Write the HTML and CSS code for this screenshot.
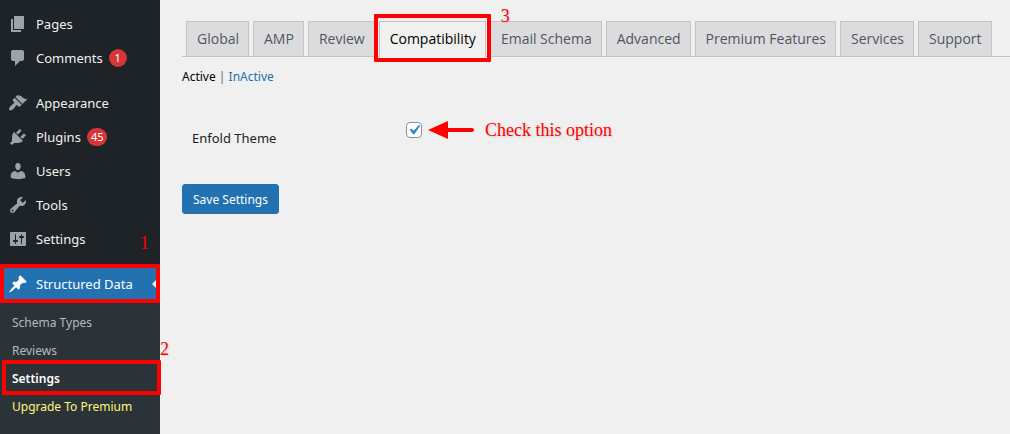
FILE: index.html
```html
<!DOCTYPE html>
<html lang="en">
<head>
<meta charset="utf-8">
<title>Structured Data Settings</title>
<link rel="stylesheet" href="styles.css">
</head>
<body>
<div class="layout">
  <nav class="sidebar" aria-label="Main menu">
    <ul class="menu">
      <li><a class="menu-link" href="#"><svg class="icon" viewBox="0 0 20 20"><path d="M6 15V2h10v13H6zm-1 1h8v2H3V5h2v11z"/></svg>Pages</a></li>
      <li><a class="menu-link" href="#"><svg class="icon" viewBox="0 0 20 20"><path d="M5 2h9c1.1 0 2 .9 2 2v7c0 1.1-.9 2-2 2h-2l-5 5v-5H5c-1.1 0-2-.9-2-2V4c0-1.1.9-2 2-2z"/></svg>Comments<span class="count">1</span></a></li>
      <li class="group"><a class="menu-link" href="#"><svg class="icon" viewBox="0 0 20 20"><path d="M14.48 11.06L7.41 3.99l1.5-1.5c.5-.56 2.3-.47 3.51.32 1.21.8 1.43 1.28 2.91 2.1 1.18.64 2.45 1.26 4.45.85zm-.71.71L6.7 4.7 4.93 6.47c-.39.39-.39 1.02 0 1.41l1.06 1.06c.39.39.39 1.03 0 1.42-.6.6-1.43 1.11-2.21 1.69-.35.26-.7.53-1.01.84C1.43 14.23.4 16.08 1.4 17.07c.99 1 2.84-.03 4.18-1.36.31-.31.58-.66.85-1.02.57-.78 1.08-1.61 1.69-2.21.39-.39 1.02-.39 1.41 0l1.06 1.06c.39.39 1.02.39 1.41 0z"/></svg>Appearance</a></li>
      <li><a class="menu-link" href="#"><svg class="icon" viewBox="0 0 20 20"><path d="M13.11 4.36L9.87 7.6 8 5.73l3.24-3.24c.35-.34 1.05-.2 1.56.32.52.51.66 1.21.31 1.55zm-8 1.77l.91-1.12 9.01 9.01-1.19.84c-.71.71-2.63 1.16-3.82 1.16H6.14L4.9 17.26c-.59.59-1.54.59-2.12 0-.59-.58-.59-1.53 0-2.12l1.24-1.24v-3.88c0-1.13.4-3.19 1.09-3.89zm7.26 3.97l3.24-3.24c.34-.35 1.04-.21 1.55.31.52.51.66 1.21.31 1.55l-3.24 3.25z"/></svg>Plugins<span class="count">45</span></a></li>
      <li><a class="menu-link" href="#"><svg class="icon" viewBox="0 0 20 20"><path d="M10 9.25c-2.27 0-2.73-3.44-2.73-3.44C7 4.02 7.82 2 9.97 2c2.16 0 2.98 2.02 2.71 3.81 0 0-.41 3.44-2.68 3.44zm0 2.57L12.72 10c2.39 0 4.52 2.33 4.52 4.53v2.49s-3.65 1.13-7.24 1.13c-3.65 0-7.24-1.13-7.24-1.13v-2.49c0-2.25 1.94-4.48 4.47-4.48z"/></svg>Users</a></li>
      <li><a class="menu-link" href="#"><svg class="icon" viewBox="0 0 20 20"><path d="M16.68 9.77c-1.34 1.34-3.3 1.67-4.95.99l-5.41 6.52c-.99.99-2.59.99-3.58 0s-.99-2.59 0-3.57l6.52-5.42c-.68-1.65-.35-3.61.99-4.95 1.28-1.28 3.12-1.62 4.72-1.06l-2.89 2.89 2.82 2.82 2.86-2.87c.53 1.58.18 3.39-1.08 4.65zM3.81 16.21c.4.39 1.04.39 1.43 0 .4-.4.4-1.04 0-1.43-.39-.4-1.03-.4-1.43 0-.39.39-.39 1.03 0 1.43z"/></svg>Tools</a></li>
      <li><a class="menu-link" href="#"><svg class="icon" viewBox="0 0 20 20"><path d="M18 16V4c0-.55-.45-1-1-1H3c-.55 0-1 .45-1 1v12c0 .55.45 1 1 1h14c.55 0 1-.45 1-1zM8 11h1c.55 0 1 .45 1 1s-.45 1-1 1H8v1.5c0 .28-.22.5-.5.5s-.5-.22-.5-.5V13H6c-.55 0-1-.45-1-1s.45-1 1-1h1V5.5c0-.28.22-.5.5-.5s.5.22.5.5V11zm5-2h-1c-.55 0-1-.45-1-1s.45-1 1-1h1V5.5c0-.28.22-.5.5-.5s.5.22.5.5V7h1c.55 0 1 .45 1 1s-.45 1-1 1h-1v5.5c0 .28-.22.5-.5.5s-.5-.22-.5-.5V9z"/></svg>Settings</a></li>
      <li class="group"><a class="menu-link current" href="#"><svg class="icon" viewBox="0 0 20 20"><path d="M10.44 3.02l1.82-1.82 6.36 6.35-1.83 1.82c-1.05-.68-2.48-.57-3.41.36l-.75.75c-.92.93-1.04 2.35-.35 3.41l-1.83 1.82-2.41-2.41-2.8 2.79c-.42.42-3.38 2.71-3.8 2.29s1.86-3.39 2.28-3.81l2.79-2.79L4.1 9.36l1.83-1.82c1.05.69 2.48.57 3.4-.36l.75-.75c.93-.92 1.05-2.35.36-3.41z"/></svg>Structured Data<span class="note step-one">1</span></a></li>
    </ul>
    <ul class="submenu">
      <li><a class="submenu-link" href="#">Schema Types</a></li>
      <li><a class="submenu-link" href="#">Reviews</a></li>
      <li><a class="submenu-link selected" href="#">Settings<span class="note step-two">2</span></a></li>
      <li><a class="submenu-link upgrade" href="#">Upgrade To Premium</a></li>
    </ul>
  </nav>

  <main class="content">
    <nav class="tabs" aria-label="Settings sections">
      <a class="tab" href="#">Global</a>
      <a class="tab" href="#">AMP</a>
      <a class="tab" href="#">Review</a>
      <a class="tab active" href="#" aria-current="page">Compatibility<span class="note step-three">3</span></a>
      <a class="tab" href="#">Email Schema</a>
      <a class="tab" href="#">Advanced</a>
      <a class="tab" href="#">Premium Features</a>
      <a class="tab" href="#">Services</a>
      <a class="tab" href="#">Support</a>
    </nav>
    <p class="filters"><a class="filter-current" href="#">Active</a> | <a class="filter" href="#">InActive</a></p>
    <form class="form">
      <div class="field">
        <label class="label" for="enfold">Enfold Theme</label>
        <div class="control">
          <span class="check"><input class="checkbox" type="checkbox" id="enfold" checked><svg class="tick" viewBox="0 0 20 20"><path d="M14.83 4.89l1.34.94-5.81 8.38H9.02L5.78 9.67l1.34-1.25 2.57 2.4z"/></svg></span>
          <svg class="arrow" viewBox="0 0 46 18"><path d="M0 9L20 0v7h24a2 2 0 0 1 0 4H20v7z"/></svg>
          <span class="note">Check this option</span>
        </div>
      </div>
      <button class="save" type="button">Save Settings</button>
    </form>
  </main>
</div>
</body>
</html>
```
FILE: styles.css
```css
* { box-sizing: border-box; }

body {
  margin: 0;
  background: #f0f0f0;
  color: #1d2327;
  font: 13px/18px "Segoe UI", "Noto Sans", "Open Sans", sans-serif;
}

a { text-decoration: none; }

ul { list-style: none; margin: 0; padding: 0; }

.layout { display: flex; min-height: 100vh; }

/* Sidebar */
.sidebar {
  display: flex;
  flex-direction: column;
  flex: 0 0 160px;
  padding-top: 7px;
  background: #1d2327;
}

.menu-link {
  position: relative;
  display: flex;
  align-items: center;
  height: 34px;
  padding-left: 8px;
  color: #f0f0f1;
}

.group { margin-top: 11px; }

.icon {
  width: 20px;
  height: 20px;
  margin-right: 8px;
  fill: #9ca2a7;
}

.count {
  min-width: 18px;
  height: 18px;
  margin-left: 6px;
  padding: 0 4px;
  border-radius: 9px;
  background: #d63638;
  color: #fff;
  font-size: 11px;
  text-align: center;
}

.current { background: #2271b1; color: #fff; }
.current .icon { fill: #fff; }

.current::before {
  content: "";
  position: absolute;
  right: 0;
  top: 9px;
  border: 8px solid transparent;
  border-right-color: #f0f0f1;
}

.submenu { flex: 1; padding: 8px 0; background: #2c3338; }

.submenu-link {
  position: relative;
  display: block;
  padding: 5px 12px;
  color: #b5babf;
  font-size: 12px;
}

.selected { color: #fff; font-weight: 600; }
.upgrade { color: #fcf67b; }

/* Content */
.content { flex: 1; min-width: 0; padding: 21px 0 0 22px; }

.tabs {
  display: flex;
  gap: 4px;
  padding-left: 4px;
  border-bottom: 1px solid #c3c4c7;
}

.tab {
  position: relative;
  padding: 5px 9px 5px 10px;
  border: 1px solid #c3c4c7;
  border-bottom: 0;
  background: #dcdcde;
  color: #50575e;
  font-family: "Segoe UI", "Open Sans", sans-serif;
  font-size: 14px;
  line-height: 24px;
  white-space: nowrap;
}

.active {
  z-index: 1;
  margin-bottom: -1px;
  background: #f0f0f0;
  color: #000;
}

.filters { margin: 11px 0 0; color: #646970; font-size: 12px; }
.filter-current { color: #000; }
.filter { color: #2271b1; }

.field {
  display: grid;
  grid-template-columns: 214px 1fr;
  align-items: end;
  padding: 34px 0 0 10px;
}

.label { padding-bottom: 1px; }

.control { display: flex; align-items: center; padding-bottom: 8px; }

.check { position: relative; display: flex; }

.checkbox {
  appearance: none;
  width: 16px;
  height: 16px;
  margin: 0;
  border: 1px solid #8c8f94;
  border-radius: 4px;
  background: #fff;
}

.tick {
  position: absolute;
  inset: -2px;
  width: 20px;
  height: 20px;
  fill: #3582c4;
  visibility: hidden;
  pointer-events: none;
}

.checkbox:checked + .tick { visibility: visible; }

.save {
  margin-top: 36px;
  padding: 1px 10px 0;
  border: 1px solid #2271b1;
  border-radius: 3px;
  background: #2271b1;
  color: #fff;
  font: inherit;
  font-size: 12px;
  line-height: 27px;
}

/* Tutorial annotations */
.note {
  color: #f00;
  font: 18px/20px "Liberation Serif", "Times New Roman", serif;
  text-shadow: 1px 1px 2px rgba(0, 0, 0, 0.15);
}

.arrow { width: 46px; height: 18px; margin: 0 11px 0 6px; fill: #f00; }

.step-one, .step-two, .step-three { position: absolute; }
.step-one { left: 140px; top: -34px; }
.step-two { left: 160px; top: -26px; }
.step-three { left: 121px; top: -16px; }

.current::after, .selected::after, .active::after {
  content: "";
  position: absolute;
  border: 4px solid #f00;
  border-radius: 1px;
}

.current::after { inset: -3px 0 -2px; }
.selected::after { inset: -5px -1px -2px 2px; }
.active::after { inset: -8px -6px -5px; }
```
